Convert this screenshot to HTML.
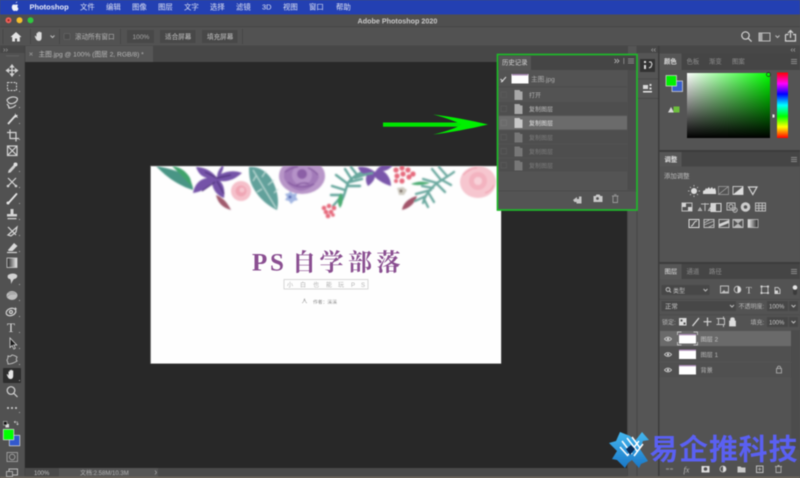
<!DOCTYPE html>
<html><head><meta charset="utf-8">
<style>
html,body{margin:0;padding:0;background:#535353;width:800px;height:478px;overflow:hidden}
svg{display:block;filter:blur(.6px)}
text{font-family:"Liberation Sans","Noto Sans CJK SC",sans-serif}
.m{font-size:7.400px;fill:#dfe3f5}
.t{font-size:6.600px;fill:#c4c4c4}
.i{fill:none;stroke:#d4d4d4;stroke-width:1.200}
.f{fill:#d4d4d4}
.g{fill:none;stroke:#bdbdbd;stroke-width:1}
</style></head><body>
<svg width="800" height="478" viewBox="0 0 800 478" xmlns="http://www.w3.org/2000/svg">
<defs>
<linearGradient id="gw" x1="0" x2="1" y1="0" y2="0"><stop offset="0" stop-color="#fff"/><stop offset="1" stop-color="#00ff00"/></linearGradient>
<linearGradient id="gk" x1="0" x2="0" y1="0" y2="1"><stop offset="0" stop-color="#000" stop-opacity="0"/><stop offset="1" stop-color="#000"/></linearGradient>
<linearGradient id="hue" x1="0" x2="0" y1="0" y2="1"><stop offset="0" stop-color="#f00"/><stop offset=".17" stop-color="#f0f"/><stop offset=".33" stop-color="#00f"/><stop offset=".5" stop-color="#0ff"/><stop offset=".67" stop-color="#0f0"/><stop offset=".83" stop-color="#ff0"/><stop offset="1" stop-color="#f00"/></linearGradient>
<linearGradient id="gr" x1="0" x2="1" y1="0" y2="0"><stop offset="0" stop-color="#222"/><stop offset="1" stop-color="#eee"/></linearGradient>
<linearGradient id="lg" x1="0" x2="0" y1="0" y2="1"><stop offset="0" stop-color="#45b7ee"/><stop offset="1" stop-color="#1a78c8"/></linearGradient>
<filter id="b1" x="-5%" y="-5%" width="110%" height="110%"><feGaussianBlur stdDeviation=".7"/></filter>
<clipPath id="art"><rect x="151" y="166" width="350" height="198"/></clipPath>
<path id="folder" d="M0 0h5l1 1.500h2v8.500h-8z"/>
</defs>

<rect width="800" height="478" fill="#535353"/>
<!-- menu bar -->
<rect width="800" height="14.500" fill="#2340b2"/>
<path d="M15.800 3.200c.9-.1 1.500-.8 1.500-1.600-.9.100-1.600.8-1.500 1.600zM18.200 8c-.5-.3-.8-.8-.8-1.400 0-.6.300-1 .8-1.300-.4-.5-1-.8-1.600-.8-.6 0-1 .3-1.400.3-.4 0-.9-.3-1.400-.3-1 0-2 .9-2 2.600 0 1.900 1.400 3.900 2.300 3.900.5 0 .7-.3 1.300-.3s.8.300 1.300.3c.8 0 1.500-1.400 1.700-2.100z" fill="#eef0fa"/>
<text x="29.500" y="9.300" font-weight="700" fill="#e8ebf8" style="font-size:7.500px">Photoshop</text>
<text class="m" x="80" y="9.500">文件</text><text class="m" x="106" y="9.500">编辑</text><text class="m" x="132" y="9.500">图像</text><text class="m" x="158" y="9.500">图层</text><text class="m" x="184" y="9.500">文字</text><text class="m" x="210" y="9.500">选择</text><text class="m" x="236" y="9.500">滤镜</text><text class="m" x="262" y="9.500">3D</text><text class="m" x="283" y="9.500">视图</text><text class="m" x="309" y="9.500">窗口</text><text class="m" x="336" y="9.500">帮助</text>

<!-- title bar -->
<rect y="14.500" width="800" height="12.500" fill="#4f4f4f"/>
<rect y="26.500" width="800" height=".7" fill="#3c3c3c"/>
<circle cx="8.500" cy="20.300" r="3" fill="#ec5f57"/><circle cx="8.500" cy="20.300" r="1" fill="#8e1f18"/>
<circle cx="19.500" cy="20.300" r="3" fill="#f5be2e"/>
<circle cx="30.500" cy="20.300" r="3" fill="#2fc840"/>
<text x="357.500" y="23.700" font-weight="700" fill="#c9c9c9" style="font-size:7.200px">Adobe Photoshop 2020</text>

<!-- options bar -->
<rect y="27" width="800" height="19" fill="#525252"/>
<rect y="45.700" width="800" height=".6" fill="#404040"/>
<rect x="2.500" y="29" width=".8" height="15" fill="#444"/><rect x="30" y="29" width=".8" height="15" fill="#444"/><rect x="59" y="29" width=".8" height="15" fill="#444"/><rect x="120" y="29" width=".8" height="15" fill="#444"/><rect x="242" y="29" width=".8" height="15" fill="#444"/>
<path d="M16 32l-5.500 5h1.700v4.500h2.800v-3h2v3h2.800v-4.500h1.700z" fill="#e4e4e4"/>
<path d="M36.500 37.500v-3.800c0-.9 1.200-.9 1.200 0v-1.100c0-.9 1.300-.9 1.300 0v-.3c0-.9 1.300-.9 1.300 0v.6c0-.9 1.300-.9 1.300 0v4.700c0 2.200-1.200 3.300-2.900 3.300-1.500 0-2.300-.9-3-2.400l-.8-1.700c-.4-.9.600-1.400 1.200-.6z" fill="#dcdcdc"/>
<path d="M50.500 35.500l2 2 2-2" class="g"/>
<rect x="64" y="33.500" width="6" height="6" rx="1" fill="#4a4a4a" stroke="#666" stroke-width=".7"/>
<text class="t" x="75" y="39" style="fill:#b5b5b5">滚动所有窗口</text>
<rect x="127" y="30" width="27" height="13" fill="#484848"/><text class="t" x="132.500" y="39" style="fill:#a8a8a8">100%</text>
<rect x="160" y="30" width="35.500" height="13" fill="#484848"/><text class="t" x="165" y="39">适合屏幕</text>
<rect x="202" y="30" width="35.500" height="13" fill="#484848"/><text class="t" x="207" y="39">填充屏幕</text>
<circle cx="745.500" cy="35.500" r="3.700" class="i"/><path d="M748.300 38.300l3.300 3.300" class="i" stroke-width="1.500"/>
<rect x="759" y="33" width="11" height="8" class="g"/><rect x="759.500" y="33.500" width="3" height="7" fill="#a8a8a8"/>
<path d="M775.500 35.500l2 2 2-2" class="g"/>
<path d="M785.500 34.500v6.500h10v-6.500h-2.500M788.500 34.500h-3M790.500 38v-7M788 33l2.500-2.500 2.500 2.500" class="i"/>

<!-- tab row -->
<rect y="46" width="627" height="16" fill="#474747"/>
<rect x="25" y="46" width="128" height="16" fill="#565656"/>
<path d="M29.500 52.500l3 3m0-3l-3 3" stroke="#999" stroke-width=".7"/>
<text x="38.500" y="56.500" style="font-size:6.700px;fill:#b9b9b9">主图.jpg @ 100% (图层 2, RGB/8) *</text>
<!-- toolbar -->
<rect x="0" y="46" width="25" height="430" fill="#515151"/>
<rect x="0" y="46" width="25" height="7" fill="#474747"/>
<path d="M3.500 48.500l1.500 1.500-1.500 1.500M6 48.500l1.500 1.500-1.500 1.500" stroke="#999" stroke-width=".6" fill="none"/>
<rect x="6" y="55.500" width="13" height=".7" fill="#6a6a6a"/>
<rect x="24.600" y="46" width=".6" height="430" fill="#3e3e3e"/>
<!-- canvas -->
<rect x="25" y="62" width="602" height="406" fill="#282828"/>

<!-- artwork -->
<rect x="150.300" y="165.700" width="351" height="198" fill="#9a9a9a"/>
<rect x="151" y="166.500" width="350" height="197" fill="#fefefe"/>
<g clip-path="url(#art)"><g filter="url(#b1)">
<path d="M156 166c12 2 27 6 32 12 4 5 5 9 5 12-10-3-24-10-37-24z" fill="#4a9585"/>
<path d="M172 166c8 1 14 5 18 12l3 10-12-13z" fill="#3fa36c"/>
<path d="M217 178c-4-6-12-11-21-11 2 5 4 9 11 11-6 1-12 5-14 15 8-1 14-5 19-10 1 6 4 12 12 15 1-7 0-13-4-17 7 1 14-1 22-8-7-3-15-2-21 1 2-4 3-7 2-9-3 3-6 7-6 13z" fill="#7553a8"/>
<path d="M217 178l-12-6m12 6l14-3m-14 6l7 13m-9-12l-13 9" stroke="#4c2e78" stroke-width="1.200"/>
<circle cx="241" cy="191" r="10" fill="#f5c0ca"/><circle cx="241" cy="191" r="5.500" fill="#f0a5b4"/><circle cx="242" cy="190" r="2.500" fill="#f6c5cf"/>
<path d="M216 195c5 2 10 5 15 15-7-2-13-6-15-15z" fill="#a05c6e"/>
<path d="M249 167c10-1 20 5 25 17 4 9 5 18 3 26-13-6-22-17-26-27-2-6-2-12-2-16z" fill="#62a19b"/>
<path d="M253 170l23 38m-14-31l4-6m2 14l6-5m0 13l4-4m-22-13l-3 5m9 8l-5 3" stroke="#c4e2dd" stroke-width="1.100"/>
<path d="M290 191l3 3 4-1-1 4 2 3-4 1-3 3-2-3-4-1 2-3-2-3 4-1z" fill="#a3b6e2"/><circle cx="290" cy="197" r="1.500" fill="#5467b0"/>
<ellipse cx="302" cy="176" rx="23" ry="18" fill="#b896c8"/>
<path d="M284 172c5-7 14-9 21-6 7 2 12 6 14 11-3 8-10 13-18 14-8-1-14-6-17-13z" fill="#a27ab8"/>
<circle cx="302" cy="175" r="10" fill="#b592c8"/><circle cx="302" cy="174" r="5" fill="#8b5fa6"/>
<path d="M288 182c6 5 16 7 26 2m-29-12c5-3 8-5 13-5m10 1c4 1 8 4 10 7M296 186c3-3 9-4 13-2" stroke="#84599f" stroke-width="1.300" fill="none"/>
<g stroke="#64a59b" stroke-width="2.400" fill="none" stroke-linecap="round">
<path d="M342 200c3-6 4-12 6-17 4-6 10-9 17-12"/>
<path d="M348 184l-12-9M345 190l-13-4M342 195l-11 0M340 198l-7 8M352 180l-7-11M358 176l-7-9M362 173l5 2M348 186l12 0M350 182l12-3M355 178l12-4"/>
</g>
<path d="M341 193c3 5 2 11-1 15-3-5-3-10 1-15z" fill="#4bab72"/>
<path d="M375 172c-5-4-11-6-17-5 1 4 4 7 9 8-2 4-1 8 1 11 3-2 6-5 7-9 4 4 9 7 16 9 0-6-3-12-8-15 3 0 7-2 10-6-6-2-12-2-18 7z" fill="#7a56aa"/>
<path d="M355 177c5-2 12-3 18-4" stroke="#6aa99e" stroke-width="2"/>
<g fill="#e66b7d"><circle cx="396" cy="170" r="2.600"/><circle cx="402" cy="168" r="2.600"/><circle cx="408" cy="170" r="2.600"/><circle cx="413" cy="174" r="2.600"/><circle cx="397" cy="176" r="2.600"/><circle cx="403" cy="174" r="2.600"/><circle cx="409" cy="177" r="2.600"/><circle cx="402" cy="181" r="2.600"/><circle cx="396" cy="181" r="2"/>
<circle cx="324" cy="208" r="2.300"/><circle cx="329" cy="206" r="2.300"/><circle cx="334" cy="208" r="2.300"/><circle cx="326" cy="212" r="2.300"/><circle cx="331" cy="212" r="2.300"/><circle cx="328" cy="216" r="2.300"/><circle cx="333" cy="215" r="1.800"/></g>
<path d="M397 188l6-1 4 3-3 5-5 0z" fill="#d0ccc2"/><circle cx="401" cy="191" r="1.500" fill="#7a6a62"/>
<path d="M402 210c1-7 7-12 15-14-2 7-7 12-15 14z" fill="#a2556b"/>
<g stroke="#6aa89f" stroke-width="2.300" fill="none" stroke-linecap="round">
<path d="M423 203c2-8 7-14 14-20 8-5 13-8 17-11"/>
<path d="M431 190l-15 4M426 196l-11 5M437 183l-14-4M433 188l-11-2M424 199l4 8M428 192l6 10M441 180l-9-11M447 176l-8-9M437 184l8 8M442 180l9 5"/>
</g>
<path d="M411 184c6-3 13-3 19-1-6 2-13 3-19 1z" fill="#4bab72"/>
<ellipse cx="478" cy="182" rx="18" ry="16" fill="#f6c6cf"/>
<circle cx="478" cy="181" r="9" fill="#f3b3c0"/><circle cx="478" cy="181" r="4" fill="#f8d2d9"/>
<path d="M463 175c4-4 9-7 14-7m8 25c4-1 7-4 9-8" stroke="#ee9bab" fill="none"/>
</g></g>
<text x="252" y="270.500" style="font-family:'Liberation Serif','Noto Serif CJK SC',serif;font-size:25px;font-weight:700;fill:#8a4f91"><tspan x="252">P</tspan><tspan x="270">S</tspan></text>
<text y="270.500" style="font-family:'Noto Serif CJK SC',serif;font-size:24px;font-weight:700;fill:#8a4f91"><tspan x="292">自</tspan><tspan x="319.500">学</tspan><tspan x="348">部</tspan><tspan x="376.500">落</tspan></text>
<rect x="284" y="279.500" width="84" height="9.500" fill="none" stroke="#cfcfcf" stroke-width=".8"/>
<text y="287" style="font-size:6px;fill:#b2b2b2"><tspan x="287">小</tspan><tspan x="300">白</tspan><tspan x="313">也</tspan><tspan x="326">能</tspan><tspan x="338">玩</tspan><tspan x="351">P</tspan><tspan x="361">S</tspan></text>
<path d="M302 303c1.500-.5 2-2 2.500-4.500.5 2.500 1 4 2.500 4.500" fill="none" stroke="#999" stroke-width=".6"/>
<text x="313" y="303.500" style="font-size:4.800px;fill:#8f8f8f">作者：溪溪</text>

<!-- status bar -->
<rect x="25" y="468" width="602" height="8.500" fill="#4a4a4a"/>
<rect x="59" y="468" width="99" height="8.500" fill="#565656"/>
<text x="34" y="475" style="font-size:6px;fill:#c0c0c0">100%</text>
<text x="80" y="475" style="font-size:6px;fill:#b5b5b5">文档:2.58M/10.3M</text>
<path d="M155 470.500l1.500 2-1.500 2" stroke="#bbb" stroke-width=".6" fill="none"/>
<rect y="476.500" width="800" height="1.500" fill="#6f675c"/>

<!-- toolbar icons -->
<g>
<path d="M12 66v9m-4.500-4.500h9M12 65l-1.500 2h3zM12 76l-1.500-2h3zM6.500 70.500l2-1.500v3zM17.500 70.500l-2-1.500v3z" class="i" stroke-width="1"/>
<rect x="7.500" y="82.500" width="9" height="8" fill="none" stroke="#d0d0d0" stroke-width="1" stroke-dasharray="2 1"/>
<path d="M7 100c2-3 7-4 10-2 1 1 0 4-3 5-2 1-5 1-6-1-1-1-1-1-1-2zM7 104c1 1 2 2 2 4 3 0 5-1 7-3" class="i"/>
<path d="M8 124l8-9" stroke="#e0e0e0" stroke-width="1.800"/><path d="M15 113l1 2 2 0-1 1 1 2-2-1-1 1z" fill="#e4e4e4"/>
<path d="M10 129.500v9h9M7 132.500h9v9" class="i" stroke-width="1.300"/>
<rect x="7.500" y="146" width="9.500" height="9.500" class="i"/><path d="M7.500 146l9.500 9.500m0-9.500l-9.500 9.500" class="i" stroke-width=".8"/>
<path d="M8.500 170.500l5-5.500 2 2-5 5.500-2.500.5z" fill="#cfcfcf"/><circle cx="15.500" cy="164.500" r="2" fill="#e0e0e0"/>
<path d="M8 178l8 8m0-8l-8 8" class="i" stroke-width="1.300"/><circle cx="8" cy="186" r="1.300" class="f"/><circle cx="16" cy="186" r="1.300" class="f"/>
<path d="M8.500 203l8-9" stroke="#e6e6e6" stroke-width="1.800" stroke-linecap="round"/><circle cx="8" cy="203" r="1.500" fill="#e6e6e6"/>
<path d="M10.500 209h3v5h3.500v2.500h-10v-2.500h3.500zM7.500 218h9v1.200h-9z" class="f"/>
<path d="M8 235l9-8-1 5-5 4zM8 227l8 8" class="i"/>
<path d="M8 250l6-7 3.500 3-5 5h-4z" fill="#d8d8d8"/><path d="M7 252.500h10" class="i" stroke-width=".8"/>
<rect x="7" y="258" width="10" height="9.500" fill="url(#gr)" stroke="#ccc" stroke-width=".8"/>
<path d="M8 275c3-2 7-2 9 0 1 2-1 4-3 4-1 1-2 3-3 5 0-2 0-4-1-5-2 0-3-2-2-4z" fill="#d2d2d2"/>
<ellipse cx="12" cy="295.500" rx="5.500" ry="4.500" fill="#bdbdbd"/>
<path d="M7 297c2-3 4-3 9-3M8 293c2 0 5-1 7 0" stroke="#8a8a8a" stroke-width=".6" fill="none"/>
<ellipse cx="11" cy="312" rx="5" ry="3.500" class="i" transform="rotate(-20 11 312)"/><circle cx="11" cy="312" r="1.500" class="i" stroke-width=".8"/><path d="M15 307l2 2-2 1z" class="f"/>
<text x="7" y="332" style="font-family:'Liberation Serif',serif;font-size:13px;fill:#dcdcdc">T</text>
<path d="M10 338v9.500l2.200-2 1.600 3.500 1.500-.7-1.600-3.300h3z" fill="#1d1d1d" stroke="#d8d8d8" stroke-width=".8"/>
<path d="M8 356c2 1 3 0 4-1 2 0 3 1 5 2-1 2-1 3 0 4-3 2-6 3-9 3 0-2-1-3-1-4 1-1 1-2 1-4z" class="g"/>
<rect x="3" y="368" width="18" height="15" rx="1" fill="#2d2d2d"/>
<path d="M8.500 376v-4c0-.9 1.100-.9 1.100 0v-1.200c0-.9 1.200-.9 1.200 0v-.4c0-.9 1.200-.9 1.200 0v.6c0-.9 1.200-.9 1.200 0v4.700c0 2.300-1.100 3.300-2.700 3.300-1.500 0-2.100-.9-2.800-2.300l-.8-1.700c-.4-.9.600-1.300 1-.5z" fill="#e6e6e6"/>
<circle cx="11" cy="390.500" r="3.800" class="i"/><path d="M14 393.500l3.500 3.500" class="i" stroke-width="1.500"/>
<circle cx="8" cy="408" r="1" class="f"/><circle cx="12" cy="408" r="1" class="f"/><circle cx="16" cy="408" r="1" class="f"/>
<rect x="5.500" y="424" width="3.500" height="3.500" fill="#ddd"/><rect x="3.500" y="421.500" width="3.500" height="3.500" fill="#111" stroke="#ddd" stroke-width=".5"/>
<path d="M14 422h3.500v3M14 422l1.500-1M14 422l1.500 1M17.500 425l-1-1.300M17.500 425l1-1.300" stroke="#ccc" stroke-width=".6" fill="none"/>
<rect x="9.300" y="435.300" width="10.500" height="10.500" fill="#3258cc" stroke="#dcdcdc" stroke-width=".7"/>
<rect x="3.300" y="429.300" width="10.500" height="10.500" fill="#00ff00" stroke="#dcdcdc" stroke-width=".7"/>
<rect x="7" y="452.500" width="10.500" height="9" fill="none" stroke="#aaa" stroke-width=".8"/><circle cx="12.200" cy="457" r="2.800" fill="none" stroke="#aaa" stroke-width=".8"/>
<rect x="9" y="469" width="8.500" height="6" class="g"/><rect x="6.500" y="471.500" width="6" height="5" fill="#515151" stroke="#bdbdbd" stroke-width=".8"/>
</g>
<g fill="#aaa"><rect x="19" y="75" width="1" height="1"/><rect x="19" y="91" width="1" height="1"/><rect x="19" y="107" width="1" height="1"/><rect x="19" y="123" width="1" height="1"/><rect x="19" y="139" width="1" height="1"/><rect x="19" y="171" width="1" height="1"/><rect x="19" y="187" width="1" height="1"/><rect x="19" y="203" width="1" height="1"/><rect x="19" y="219" width="1" height="1"/><rect x="19" y="235" width="1" height="1"/><rect x="19" y="251" width="1" height="1"/><rect x="19" y="284" width="1" height="1"/><rect x="19" y="300" width="1" height="1"/><rect x="19" y="316" width="1" height="1"/><rect x="19" y="332" width="1" height="1"/><rect x="19" y="348" width="1" height="1"/><rect x="19" y="364" width="1" height="1"/><rect x="19" y="380" width="1" height="1"/><rect x="19" y="412" width="1" height="1"/></g>

<!-- dock columns -->
<rect x="627" y="46" width="32" height="430" fill="#555"/>
<rect x="627" y="46" width="1" height="430" fill="#474747"/>
<rect x="636.500" y="46" width="1" height="430" fill="#474747"/>
<rect x="658" y="46" width="1.500" height="430" fill="#3c3c3c"/>
<rect x="637" y="46" width="21" height="7" fill="#474747"/>
<path d="M653 48.500l-1.500 1.500 1.500 1.500M655.500 48.500l-1.500 1.500 1.500 1.500" stroke="#aaa" stroke-width=".6" fill="none"/>
<rect x="640" y="59" width="15" height="13" fill="#333"/>
<path d="M644 61h2v2h-2zM644 65h2v4h-2z" fill="#ddd"/><path d="M649 62h2l1 2-1 3-2 1" stroke="#ddd" fill="none"/>
<rect x="638" y="78.500" width="20" height=".7" fill="#444"/><rect x="638" y="98" width="20" height=".7" fill="#444"/>
<rect x="643" y="85" width="5" height="4" fill="#d8d8d8"/><rect x="649.500" y="84" width="2" height="2" fill="#d8d8d8"/><rect x="649.500" y="87.500" width="2" height="2" fill="#d8d8d8"/><rect x="643" y="91" width="9" height="1.500" fill="#e6e6e6"/>

<!-- history panel -->
<rect x="498" y="55" width="139" height="155.500" fill="#545454"/>
<rect x="498" y="55" width="139" height="15" fill="#454545"/>
<rect x="499" y="56" width="32" height="14" fill="#565656"/>
<text x="502" y="64.500" style="font-size:6.400px;fill:#d6d6d6">历史记录</text>
<path d="M614.500 59l2 2-2 2M617 59l2 2-2 2" stroke="#ccc" stroke-width=".7" fill="none"/>
<rect x="623.500" y="58" width=".6" height="6" fill="#aaa"/>
<path d="M628 59h6M628 61h6M628 63h6" stroke="#a0a0a0" stroke-width=".7"/>
<rect x="627.500" y="70" width="8.500" height="120" fill="#4c4c4c"/>
<rect x="499" y="70" width="128" height="16.500" fill="#535353"/>
<rect x="499" y="86.500" width="128" height=".7" fill="#474747"/>
<path d="M500.500 79l2 2 3.500-4" stroke="#ddd" stroke-width="1" fill="none"/><path d="M503 81l-2 1" stroke="#ddd"/>
<rect x="511.500" y="74" width="17" height="9.500" fill="#fdfdfd"/><rect x="512" y="74" width="16" height="1.500" fill="#a98ab4"/>
<text x="531" y="81.500" style="font-size:6.600px;fill:#adadad">主图.jpg</text>
<g>
<rect x="499" y="88" width="128" height="13" fill="#535353"/>
<rect x="499" y="102" width="128" height="13" fill="#4e4e4e"/>
<rect x="499" y="116" width="128" height="13.500" fill="#6b6b6b"/>
<rect x="499" y="130.500" width="128" height="13" fill="#4e4e4e"/>
<rect x="499" y="144.500" width="128" height="13" fill="#4e4e4e"/>
<rect x="499" y="158.500" width="128" height="13" fill="#4e4e4e"/>
<g fill="none" stroke="#5c5c5c" stroke-width=".7"><rect x="501" y="92" width="5.500" height="5.500"/><rect x="501" y="106" width="5.500" height="5.500"/><rect x="501" y="120" width="5.500" height="5.500" stroke="#777"/><rect x="501" y="134.500" width="5.500" height="5.500"/><rect x="501" y="148.500" width="5.500" height="5.500"/><rect x="501" y="162.500" width="5.500" height="5.500"/></g>
<use href="#folder" x="514.500" y="90" fill="#a8a8a8"/><use href="#folder" x="514.500" y="104" fill="#a8a8a8"/><use href="#folder" x="514.500" y="118" fill="#c8c8c8"/>
<use href="#folder" x="514.500" y="132.500" fill="#777"/><use href="#folder" x="514.500" y="146.500" fill="#777"/><use href="#folder" x="514.500" y="160.500" fill="#777"/>
<text x="529" y="97.300" style="font-size:6px;fill:#b4b4b4">打开</text>
<text x="529" y="111.300" style="font-size:6px;fill:#bdbdbd">复制图层</text>
<text x="529" y="125.300" style="font-size:6px;fill:#e2e2e2">复制图层</text>
<text x="529" y="139.800" style="font-size:6px;fill:#7c7c7c">复制图层</text>
<text x="529" y="153.800" style="font-size:6px;fill:#7c7c7c">复制图层</text>
<text x="529" y="167.800" style="font-size:6px;fill:#7c7c7c">复制图层</text>
</g>
<rect x="498" y="190.500" width="139" height=".7" fill="#464646"/>
<path d="M573 200l4-3v2h2v-2.500l2.500 0 0 7h-5v-1.500h-2z" fill="#c4c4c4"/>
<path d="M593.500 196h2l1-1.500h3l1 1.500h2v6h-9z" fill="#c8c8c8"/><circle cx="597.500" cy="198.500" r="1.400" fill="#545454"/>
<path d="M612 196h6.500M613 196.500v6h4.500v-6M614 194.700h2.500" stroke="#999" stroke-width=".9" fill="none"/>
<rect x="497.500" y="54.500" width="139.500" height="155.500" fill="none" stroke="#1fb82a" stroke-width="1.700"/>

<!-- arrow -->
<rect x="383" y="122.500" width="82" height="4.200" fill="#00e600"/>
<path d="M433 114.500c18 2 38 6 55 10-17 4-37 8-55 10 9-2 20-5 29-10-9-4-20-8-29-10z" fill="#00f000"/>

<!-- right panels -->
<rect x="659.500" y="53" width="140.500" height="97" fill="#545454"/>
<rect x="659.500" y="46" width="140.500" height="8" fill="#474747"/>
<path d="M792.500 48.500l-1.500 1.500 1.500 1.500M795 48.500l-1.500 1.500 1.500 1.500" stroke="#aaa" stroke-width=".6" fill="none"/>
<rect x="659.500" y="53.500" width="140.500" height="16.500" fill="#454545"/>
<rect x="659.500" y="53.500" width="22" height="16.500" fill="#565656"/>
<text x="664" y="63.500" style="font-size:6.400px;fill:#e0e0e0;font-weight:700">颜色</text>
<text x="686.500" y="63.500" style="font-size:6.400px;fill:#8e8e8e">色板</text>
<text x="709" y="63.500" style="font-size:6.400px;fill:#8e8e8e">渐变</text>
<text x="732" y="63.500" style="font-size:6.400px;fill:#8e8e8e">图案</text>
<path d="M791 59.500h6M791 61.500h6M791 63.500h6" stroke="#a0a0a0" stroke-width=".7"/>
<rect x="672" y="81" width="10.500" height="10.500" fill="#3a5fcb" stroke="#dcdcdc" stroke-width=".7"/>
<rect x="666" y="75.500" width="10.500" height="10.500" fill="#00f000" stroke="#dcdcdc" stroke-width=".7"/>
<path d="M668 112.500l3-5.500 3 5.500z" fill="#d8d8d8"/>
<rect x="673.500" y="106.500" width="6" height="6" fill="#6cbf3c"/>
<rect x="687" y="73" width="83" height="65" fill="url(#gw)"/><rect x="687" y="73" width="83" height="65" fill="url(#gk)"/>
<circle cx="768.500" cy="74.500" r="2" fill="none" stroke="#222" stroke-width=".7"/>
<rect x="777" y="72.500" width="11" height="65.500" fill="url(#hue)"/>
<path d="M772.500 114v4l2-2z" fill="#eee"/><rect x="772.500" y="114.500" width="2" height="3" fill="#eee"/>
<rect x="659.500" y="150" width="140.500" height="2" fill="#3c3c3c"/>
<rect x="659.500" y="152" width="140.500" height="14.500" fill="#454545"/>
<rect x="659.500" y="152" width="22" height="14.500" fill="#565656"/>
<text x="664.500" y="161.500" style="font-size:6.400px;fill:#e0e0e0;font-weight:700">调整</text>
<path d="M791 157.500h6M791 159.500h6M791 161.500h6" stroke="#a0a0a0" stroke-width=".7"/>
<text x="664" y="178" style="font-size:6.400px;fill:#bcbcbc">添加调整</text>
<!-- adjustment icons -->
<circle cx="694" cy="191" r="3" fill="#ddd"/><path d="M694 185v1.500M694 195.500v1.500M688 191h1.500M698.500 191h1.500M690 187l1 1M697 194l1 1M698 187l-1 1M691 194l-1 1" stroke="#ddd" stroke-width=".7"/>
<path d="M703 194v-3l2-1 1-2 1 1 2-2 1 2 2-2 1 2 2-1 1 3v3z" fill="#ddd"/>
<rect x="718.500" y="186.500" width="10" height="8" fill="none" stroke="#8d8d8d"/><path d="M718.500 194.500l10-8" stroke="#aaa" stroke-width=".8"/>
<rect x="733" y="186.500" width="10" height="8" fill="#555" stroke="#ddd" stroke-width=".8"/><path d="M733 194.500l10-8v8z" fill="#ddd"/>
<path d="M748.500 187h8.500l-4.200 7.500z" class="i"/>
<rect x="682" y="203" width="10" height="8" class="g"/><rect x="682" y="203" width="4" height="4" class="f"/><rect x="688" y="207" width="4" height="4" class="f"/>
<path d="M701 204h8M705 203v8M700 208l-1.500 2.500h3zM710 208l-1.500 2.500h3z" class="g"/>
<rect x="711" y="203.500" width="10" height="8" fill="none" stroke="#ddd"/><rect x="711" y="203.500" width="5" height="8" class="f"/>
<rect x="727" y="203" width="8" height="7" class="g"/><circle cx="731" cy="206.500" r="2" class="g"/><circle cx="735" cy="210" r="2.200" class="g"/>
<circle cx="745.500" cy="207" r="4.800" fill="#ccc"/><circle cx="745.500" cy="207" r="1.800" fill="#555"/>
<rect x="755.500" y="203" width="10" height="8" class="g"/><path d="M758.800 203v8M762.200 203v8M755.500 205.700h10M755.500 208.300h10" class="g" stroke-width=".7"/>
<rect x="689" y="219.500" width="10" height="8" fill="none" stroke="#ddd"/><path d="M691 226c3 0 2-5 6-5" stroke="#ddd" fill="none"/>
<rect x="704" y="219.500" width="10" height="8" class="g"/><path d="M704 225l10-4M704 223l6-3.500M708 227.500l6-3" stroke="#bbb" stroke-width=".8"/>
<rect x="719" y="219.500" width="10" height="8" class="g"/><path d="M719 224l10-4v3l-10 4z" class="f"/>
<rect x="733" y="219.500" width="10" height="8" class="g"/><path d="M733 219.500l5 4 5-4zM733 227.500l5-4 5 4z" fill="#ccc" opacity=".8"/>
<rect x="748" y="219.500" width="10" height="8" fill="url(#gr)" stroke="#ccc" stroke-width=".7" transform="matrix(-1 0 0 1 1506 0)"/>
<rect x="659.500" y="262" width="140.500" height="2" fill="#3c3c3c"/>
<!-- layers panel -->
<rect x="659.500" y="264" width="140.500" height="15" fill="#454545"/>
<rect x="659.500" y="264" width="22" height="15" fill="#565656"/>
<text x="664.500" y="273.500" style="font-size:6.400px;fill:#e0e0e0">图层</text>
<text x="686.500" y="273.500" style="font-size:6.400px;fill:#8e8e8e">通道</text>
<text x="709" y="273.500" style="font-size:6.400px;fill:#8e8e8e">路径</text>
<path d="M791 269.500h6M791 271.500h6M791 273.500h6" stroke="#a0a0a0" stroke-width=".7"/>
<rect x="661.500" y="285" width="48" height="10" rx="1" fill="#474747"/>
<circle cx="668" cy="289.500" r="1.900" class="g" stroke-width=".7"/><path d="M669.500 291l1.500 1.500" class="g" stroke-width=".7"/>
<text x="673" y="292.800" style="font-size:6px;fill:#c4c4c4">类型</text>
<path d="M703.500 289l2 2 2-2" class="g" stroke-width=".7"/>
<rect x="720.500" y="286" width="8" height="7" class="g"/><path d="M721 293l3-3 2 2 1-1 2 2z" fill="#bdbdbd"/>
<circle cx="737.500" cy="289.500" r="3.300" class="g"/><path d="M737.500 286.200a3.300 3.300 0 0 1 0 6.600z" fill="#ddd"/>
<text x="746" y="293.500" style="font-family:'Liberation Serif',serif;font-size:9.500px;fill:#d0d0d0">T</text>
<rect x="761.500" y="286.500" width="6.500" height="6.500" class="g"/><g fill="#ccc"><rect x="760.500" y="285.500" width="2" height="2"/><rect x="767" y="285.500" width="2" height="2"/><rect x="760.500" y="292" width="2" height="2"/><rect x="767" y="292" width="2" height="2"/></g>
<path d="M775 287.500h3l2 2v4h-5z" class="g"/><rect x="774.500" y="290.500" width="3.500" height="3.500" class="f"/>
<rect x="793" y="287" width="4" height="8" rx="2" fill="#3c3c3c"/><circle cx="795" cy="287.500" r="2.300" fill="#e4e4e4"/>
<rect x="659.500" y="299" width="140.500" height=".6" fill="#474747"/>
<rect x="661.500" y="301" width="74.500" height="10" fill="#474747"/>
<text x="665" y="308.500" style="font-size:6.400px;fill:#c8c8c8">正常</text>
<path d="M730 305l2 2 2-2" class="g" stroke-width=".7"/>
<text x="738.500" y="308.500" style="font-size:6px;fill:#b8b8b8">不透明度:</text>
<rect x="767" y="301" width="21" height="10" fill="#474747"/>
<text x="769" y="308.500" style="font-size:6px;fill:#c8c8c8">100%</text>
<rect x="789" y="301" width="9" height="10" fill="#474747"/><path d="M791.500 305l2 2 2-2" class="g" stroke-width=".7"/>
<rect x="659.500" y="314.500" width="140.500" height=".6" fill="#474747"/>
<text x="662" y="324.500" style="font-size:6px;fill:#b8b8b8">锁定:</text>
<rect x="679" y="318" width="7.500" height="7.500" fill="#ddd"/><rect x="680.500" y="319.500" width="2" height="2" fill="#555"/><rect x="683.500" y="322.500" width="2" height="2" fill="#555"/>
<path d="M692.500 326l6.500-8" stroke="#ddd" stroke-width="1.300"/>
<path d="M707.500 317.500v8.500M703.500 321.700h8" class="i" stroke-width=".9"/>
<rect x="718.500" y="318.500" width="6" height="6" class="g"/><path d="M716.500 318.500h3M723.500 316.500v3M716.500 324.500h3M723.500 324v3" class="g"/>
<path d="M729.500 321h6v5h-6zM730.500 321v-1.500c0-2.300 4-2.300 4 0v1.500" stroke="#ddd" fill="#ddd" stroke-width=".7"/>
<text x="750.500" y="324.500" style="font-size:6px;fill:#b8b8b8">填充:</text>
<rect x="767" y="317" width="21" height="10" fill="#474747"/>
<text x="769" y="324.500" style="font-size:6px;fill:#c8c8c8">100%</text>
<rect x="789" y="317" width="9" height="10" fill="#474747"/><path d="M791.500 321l2 2 2-2" class="g" stroke-width=".7"/>
<rect x="791" y="330" width="9" height="120" fill="#4c4c4c"/>
<rect x="660" y="331" width="131" height="15" fill="#6a6a6a"/>
<rect x="660" y="347" width="131" height="14.500" fill="#505050"/>
<rect x="660" y="363" width="131" height="14.500" fill="#505050"/>
<g>
<path d="M664.500 339c2-2.500 5-2.500 7 0-2 2.500-5 2.500-7 0z" fill="none" stroke="#ddd" stroke-width=".8"/><circle cx="668" cy="339" r="1.100" fill="#ddd"/>
<path d="M664.500 354.500c2-2.500 5-2.500 7 0-2 2.500-5 2.500-7 0z" fill="none" stroke="#ddd" stroke-width=".8"/><circle cx="668" cy="354.500" r="1.100" fill="#ddd"/>
<path d="M664.500 370c2-2.500 5-2.500 7 0-2 2.500-5 2.500-7 0z" fill="none" stroke="#ddd" stroke-width=".8"/><circle cx="668" cy="370" r="1.100" fill="#ddd"/>
</g>
<rect x="679" y="334" width="17" height="9.500" fill="#fff"/><rect x="679" y="334" width="17" height="1.300" fill="#a98ab4"/>
<path d="M677.500 335v-3h4M693.500 332h4v3M677.500 342v3h4M693.500 345h4v-3" fill="none" stroke="#ddd" stroke-width=".7"/>
<rect x="679" y="349.500" width="17" height="9.500" fill="#fff"/><rect x="679" y="349.500" width="17" height="1.300" fill="#a98ab4"/>
<rect x="679" y="365" width="17" height="9.500" fill="#fff"/><rect x="679" y="365" width="17" height="1.300" fill="#a98ab4"/>
<text x="700.500" y="341.500" style="font-size:6.200px;fill:#c8c8c8">图层 2</text>
<text x="700.500" y="357" style="font-size:6.200px;fill:#b8b8b8">图层 1</text>
<text x="700.500" y="372.500" style="font-size:6.200px;fill:#b8b8b8">背景</text>
<path d="M776.500 368.500h5v4.500h-5zM777.500 368.500v-1c0-1.800 3-1.800 3 0v1" fill="none" stroke="#b5b5b5" stroke-width=".8"/>
<rect x="659.500" y="461" width="140.500" height="15.500" fill="#515151"/>
<!-- layers footer -->
<path d="M666 469h3M670 469h3" stroke="#858585" stroke-width="1.500"/>
<text x="683.500" y="472.500" style="font-family:'Liberation Serif',serif;font-style:italic;font-size:8px;fill:#bbb">fx</text>
<rect x="701.500" y="466" width="8" height="6.500" fill="#ddd"/><circle cx="705.500" cy="469" r="1.800" fill="#515151"/>
<circle cx="723" cy="469" r="3" fill="#555" stroke="#ccc" stroke-width=".8"/><path d="M723 466a3 3 0 0 1 0 6z" fill="#ddd"/>
<path d="M737.500 466.500h3l1 1h4v5h-8z" fill="#c8c8c8"/>
<rect x="756.500" y="466" width="6.500" height="6.500" class="g"/><path d="M759.700 467.500v3.500M758 469.200h3.500" stroke="#bbb" stroke-width=".7"/>
<path d="M775 466.500h7M776 467v5.500h5v-5.500M777.500 465.500h2" stroke="#aaa" stroke-width=".9" fill="none"/>

<!-- watermark -->
<g>
<path d="M620 432l10 4 5 5 7-9 7 8-6 1-3 8 8 12-7 3-2 4-7-8-4 3-3 5-8-8-5-1 5-8-8-8 7-2z" fill="url(#lg)"/>
<path d="M622 441l10 13M627 438l10 13M632 437l8 11M639 441l-11 14M643 444l-9 12M620 447l8 9" stroke="#fff" stroke-width="1.500"/>
<path d="M626 449l4 6 5-6-4-4z" fill="#0a2b55"/>
</g>
<text y="459.500" style="font-family:'Noto Sans CJK SC',sans-serif;font-size:29px;font-weight:700;fill:#5a60f2"><tspan x="649.500">易</tspan><tspan x="679">企</tspan><tspan x="709">推</tspan><tspan x="738.500">科</tspan><tspan x="768.500">技</tspan></text>
</svg>
</body></html>
